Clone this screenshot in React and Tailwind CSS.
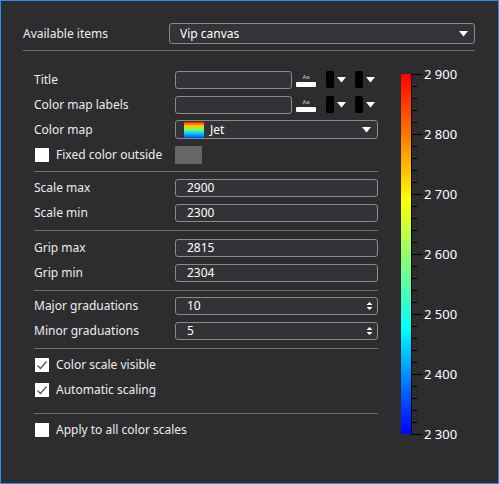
import React from "react";

const font = { fontFamily: '"Noto Sans", "Open Sans", sans-serif' };

const Tri = ({ className = "" }) => (
    <svg width="9" height="6" viewBox="0 0 9 6" className={className}>
        <path d="M0 0 H9 L4.5 5.5 Z" fill="#ffffff" />
    </svg>
);

const Sep = ({ className = "" }) => <div className={`h-px bg-[#6f6f6f] ${className}`} />;

const Row = ({ label, children, className = "" }) => (
    <div className={`flex h-[25px] items-center ${className}`}>
        <div className="w-[141px] shrink-0 text-[12px] text-[#ececec]">{label}</div>
        {children}
    </div>
);

const Field = ({ value = "", w = "w-[203px]", spin = false }) => (
    <div className={`relative flex h-[18px] ${w} items-center rounded-[3px] border border-[#8a8a8a] bg-[#333337] pl-[11px] text-[12px] text-white`}>
        {value}
        {spin && (
            <svg width="7" height="10" viewBox="0 0 7 10" className="absolute right-[4px] top-[3px]">
                <path d="M0.5 4 L3.5 1 L6.5 4 Z" fill="#ffffff" />
                <path d="M0.5 6 L3.5 9 L6.5 6 Z" fill="#ffffff" />
            </svg>
        )}
    </div>
);

const ColorPick = () => (
    <div className="flex items-center">
        <div className="h-[17px] w-[8px] rounded-[2px] bg-black" />
        <Tri className="ml-[3px]" />
    </div>
);

const FontIcon = () => (
    <div className="flex w-[20px] flex-col items-center">
        <span className="text-[6px] leading-[8px] text-[#cfcfcf]">Aa</span>
        <div className="mt-[1px] h-[5px] w-[20px] rounded-[1px] bg-white" />
    </div>
);

const Check = ({ checked, label, className = "" }) => (
    <div className={`flex h-[25px] items-center ${className}`}>
        <div className="ml-[1px] flex h-[14px] w-[14px] items-center justify-center bg-white">
            {checked && (
                <svg width="12" height="10" viewBox="0 0 12 10">
                    <path d="M1.5 5.5 L4.5 8.5 L10.5 1.5" fill="none" stroke="#555555" strokeWidth="1.3" />
                </svg>
            )}
        </div>
        <span className="ml-[7px] text-[12px] text-[#ececec]">{label}</span>
    </div>
);

const ColorBar = () => {
    const majors = ["2 900", "2 800", "2 700", "2 600", "2 500", "2 400", "2 300"];
    const ticks = Array.from({ length: 31 }, (_, i) => i);
    return (
        <div className="relative mt-[7px] h-[380px] w-[80px]">
            <div className="absolute left-0 top-0 h-[360px] w-[10px] bg-[linear-gradient(to_bottom,#ff0000_0%,#ff7a00_17%,#ffff00_35%,#80ff80_53%,#00ffff_71%,#0080ff_85%,#0000ff_100%)]" />
            <svg width="24" height="362" className="absolute left-[9px] top-0">
                <line x1="1.5" y1="0" x2="1.5" y2="361" stroke="#000" strokeWidth="1" />
                {ticks.map((i) => (
                    <line key={i} x1="1" y1={i * 12 + 0.5} x2={i % 5 === 0 ? 12 : 7} y2={i * 12 + 0.5} stroke="#000" strokeWidth="1" />
                ))}
            </svg>
            {majors.map((m, i) => (
                <div key={m} className="absolute left-[23px] text-[13px] leading-[16px] text-white" style={{ top: i * 60 - 8 }}>
                    {m}
                </div>
            ))}
        </div>
    );
};

export default function App() {
    return (
        <div className="h-[484px] w-[499px] border border-[#2f8cf0] bg-[#2d2d30] pl-[22px] pr-[23px] pt-[22px]" style={font}>
            <div className="flex items-center">
                <div className="w-[146px] text-[12px] text-[#ececec]">Available items</div>
                <div className="flex h-[21px] flex-1 items-center justify-between rounded-[3px] border border-[#8a8a8a] bg-[#333338] pl-[10px] pr-[6px] text-[12px] text-white">
                    <span>Vip canvas</span>
                    <Tri />
                </div>
            </div>
            <Sep className="mt-[6px]" />

            <div className="flex pl-[11px] pt-[16px]">
                <div className="w-[344px]">
                    <Row label="Title">
                        <Field w="w-[117px]" />
                        <div className="ml-[4px] flex items-center gap-[4px]">
                            <FontIcon />
                            <div className="ml-[6px] flex items-center gap-[9px]">
                                <ColorPick />
                                <ColorPick />
                            </div>
                        </div>
                    </Row>
                    <Row label="Color map labels">
                        <Field w="w-[117px]" />
                        <div className="ml-[4px] flex items-center gap-[4px]">
                            <FontIcon />
                            <div className="ml-[6px] flex items-center gap-[9px]">
                                <ColorPick />
                                <ColorPick />
                            </div>
                        </div>
                    </Row>
                    <Row label="Color map">
                        <div className="flex h-[19px] w-[203px] items-center justify-between rounded-[3px] border border-[#8a8a8a] bg-[#333337] pl-[8px] pr-[6px] text-[12px] text-white">
                            <div className="flex items-center">
                                <div className="h-[16px] w-[20px] bg-[linear-gradient(to_bottom,#ff2000,#ffd000,#60ff80,#00c0ff,#0040ff)]" />
                                <span className="ml-[6px]">Jet</span>
                            </div>
                            <Tri />
                        </div>
                    </Row>
                    <div className="flex h-[25px] items-center">
                        <Check label="Fixed color outside" className="w-[141px]" />
                        <div className="h-[18px] w-[27px] bg-[#666666]" />
                    </div>
                    <Sep className="mt-[4px] mb-[3px]" />
                    <Row label="Scale max"><Field value="2900" /></Row>
                    <Row label="Scale min"><Field value="2300" /></Row>
                    <Sep className="mt-[5px] mb-[4px]" />
                    <Row label="Grip max"><Field value="2815" /></Row>
                    <Row label="Grip min"><Field value="2304" /></Row>
                    <Sep className="mt-[5px] mb-[2px]" />
                    <Row label="Major graduations"><Field value="10" spin /></Row>
                    <Row label="Minor graduations"><Field value="5" spin /></Row>
                    <Sep className="mt-[5px] mb-[3px]" />
                    <Check checked label="Color scale visible" />
                    <Check checked label="Automatic scaling" />
                    <Sep className="mt-[11px] mb-[3px]" />
                    <Check label="Apply to all color scales" />
                </div>
                <div className="ml-[23px]">
                    <ColorBar />
                </div>
            </div>
        </div>
    );
}
